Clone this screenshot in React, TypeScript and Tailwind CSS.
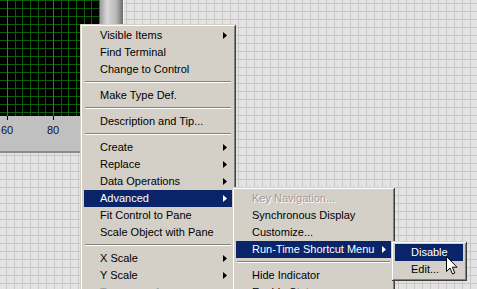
import React from 'react';

type Item =
  | { sep: true }
  | { label: string; arrow?: boolean; active?: boolean; disabled?: boolean };

const mainItems: Item[] = [
  { label: 'Visible Items', arrow: true },
  { label: 'Find Terminal' },
  { label: 'Change to Control' },
  { sep: true },
  { label: 'Make Type Def.' },
  { sep: true },
  { label: 'Description and Tip...' },
  { sep: true },
  { label: 'Create', arrow: true },
  { label: 'Replace', arrow: true },
  { label: 'Data Operations', arrow: true },
  { label: 'Advanced', arrow: true, active: true },
  { label: 'Fit Control to Pane' },
  { label: 'Scale Object with Pane' },
  { sep: true },
  { label: 'X Scale', arrow: true },
  { label: 'Y Scale', arrow: true },
  { label: 'Transpose Array', disabled: true },
];

const advancedItems: Item[] = [
  { label: 'Key Navigation...', disabled: true },
  { label: 'Synchronous Display' },
  { label: 'Customize...' },
  { label: 'Run-Time Shortcut Menu', arrow: true, active: true },
  { sep: true },
  { label: 'Hide Indicator' },
  { label: 'Enable State', arrow: true },
];

const shortcutItems: Item[] = [
  { label: 'Disable', active: true },
  { label: 'Edit...' },
];

const Arrow = ({ white }: { white?: boolean }) => (
  <svg width="4" height="7" viewBox="0 0 4 7" className="shrink-0">
    <path d="M0 0L4 3.5L0 7Z" fill={white ? '#fff' : '#000'} />
  </svg>
);

const MenuRows = ({ items }: { items: Item[] }) => (
  <>
    {items.map((it, i) =>
      'sep' in it ? (
        <div key={i} className="h-[9px] pt-[3px] mx-[1px]">
          <div className="h-px bg-[#808080]" />
          <div className="h-px bg-white" />
        </div>
      ) : (
        <div
          key={i}
          className={
            'h-[17px] flex items-center pl-[16px] pr-[5px] whitespace-nowrap ' +
            (it.active ? 'bg-[#0a246a] text-white' : it.disabled ? 'text-[#9c9c9c] [text-shadow:1px_1px_0_#fff]' : 'text-black')
          }
        >
          <span className="flex-1">{it.label}</span>
          {it.arrow && <Arrow white={it.active} />}
        </div>
      )
    )}
  </>
);

const menuBox =
  'absolute bg-[#d4d0c8] px-[4px] py-[3px] shadow-[inset_1px_1px_0_#d4d0c8,inset_-1px_-1px_0_#404040,inset_2px_2px_0_#fff,inset_-2px_-2px_0_#808080]';

const Graph = () => {
  const xs = Array.from({ length: 14 }, (_, k) => Math.round(7 + (46 / 6) * (k - 1)));
  const ys = Array.from({ length: 15 }, (_, k) => 8 * k);
  return (
    <svg width="100" height="116" className="block">
      <rect width="100" height="116" fill="#000" />
      {ys.map((y) => (
        <line key={'h' + y} x1="0" x2="100" y1={y + 0.5} y2={y + 0.5} stroke="#0b5f0b" />
      ))}
      {xs.map((x, k) => (
        <line
          key={'v' + k}
          x1={x + 0.5}
          x2={x + 0.5}
          y1="0"
          y2="116"
          stroke={(k - 1) % 6 === 0 ? '#14961a' : '#0b5f0b'}
        />
      ))}
    </svg>
  );
};

export default function App() {
  return (
    <div
      className="relative w-[477px] h-[289px] overflow-hidden bg-[#e3e3e3] bg-[image:linear-gradient(#c8c8c8_1px,transparent_1px),linear-gradient(90deg,#c8c8c8_1px,transparent_1px)] bg-[size:8px_8px] bg-[position:6px_3px] text-[11px] leading-none font-['Liberation_Sans',Arial,sans-serif]"
    >
      {/* chart control */}
      <div className="flex w-[124px]">
        <div className="flex flex-col w-[100px]">
          <Graph />
          <div className="relative h-[37px] bg-[#c0c0c0] border-b-2 border-[#8a8a8a]">
            <div className="absolute left-[7px] top-0 w-px h-[4px] bg-black" />
            <div className="absolute left-[53px] top-0 w-px h-[4px] bg-black" />
            <div className="flex text-[#10102a]">
              <span className="w-[14px] pt-[9px] text-center">60</span>
              <span className="ml-[32px] w-[14px] pt-[9px] text-center">80</span>
            </div>
          </div>
        </div>
        <div className="w-[23px] h-[153px] bg-[linear-gradient(90deg,#9a9a9a,#d8d8d8_30%,#b8b8b8_70%,#6a6a6a)]" />
        <div className="w-px h-[153px] bg-[#f4f4f4]" />
      </div>

      <div className={menuBox + ' left-[80px] top-[24px] w-[156px]'}>
        <MenuRows items={mainItems} />
      </div>

      <div className={menuBox + ' left-[232px] top-[187px] w-[163px]'}>
        <MenuRows items={advancedItems} />
      </div>

      <div className={menuBox + ' left-[391px] top-[241px] w-[76px]'}>
        <MenuRows items={shortcutItems} />
      </div>

      {/* mouse pointer */}
      <svg width="13" height="21" viewBox="0 0 13 21" className="absolute left-[445px] top-[255px]">
        <path
          d="M1.5 1.5V16.5L5 13L7.5 19L9.8 18L7.3 12.2H12Z"
          fill="#fff"
          stroke="#000"
          strokeLinejoin="miter"
        />
      </svg>
    </div>
  );
}
